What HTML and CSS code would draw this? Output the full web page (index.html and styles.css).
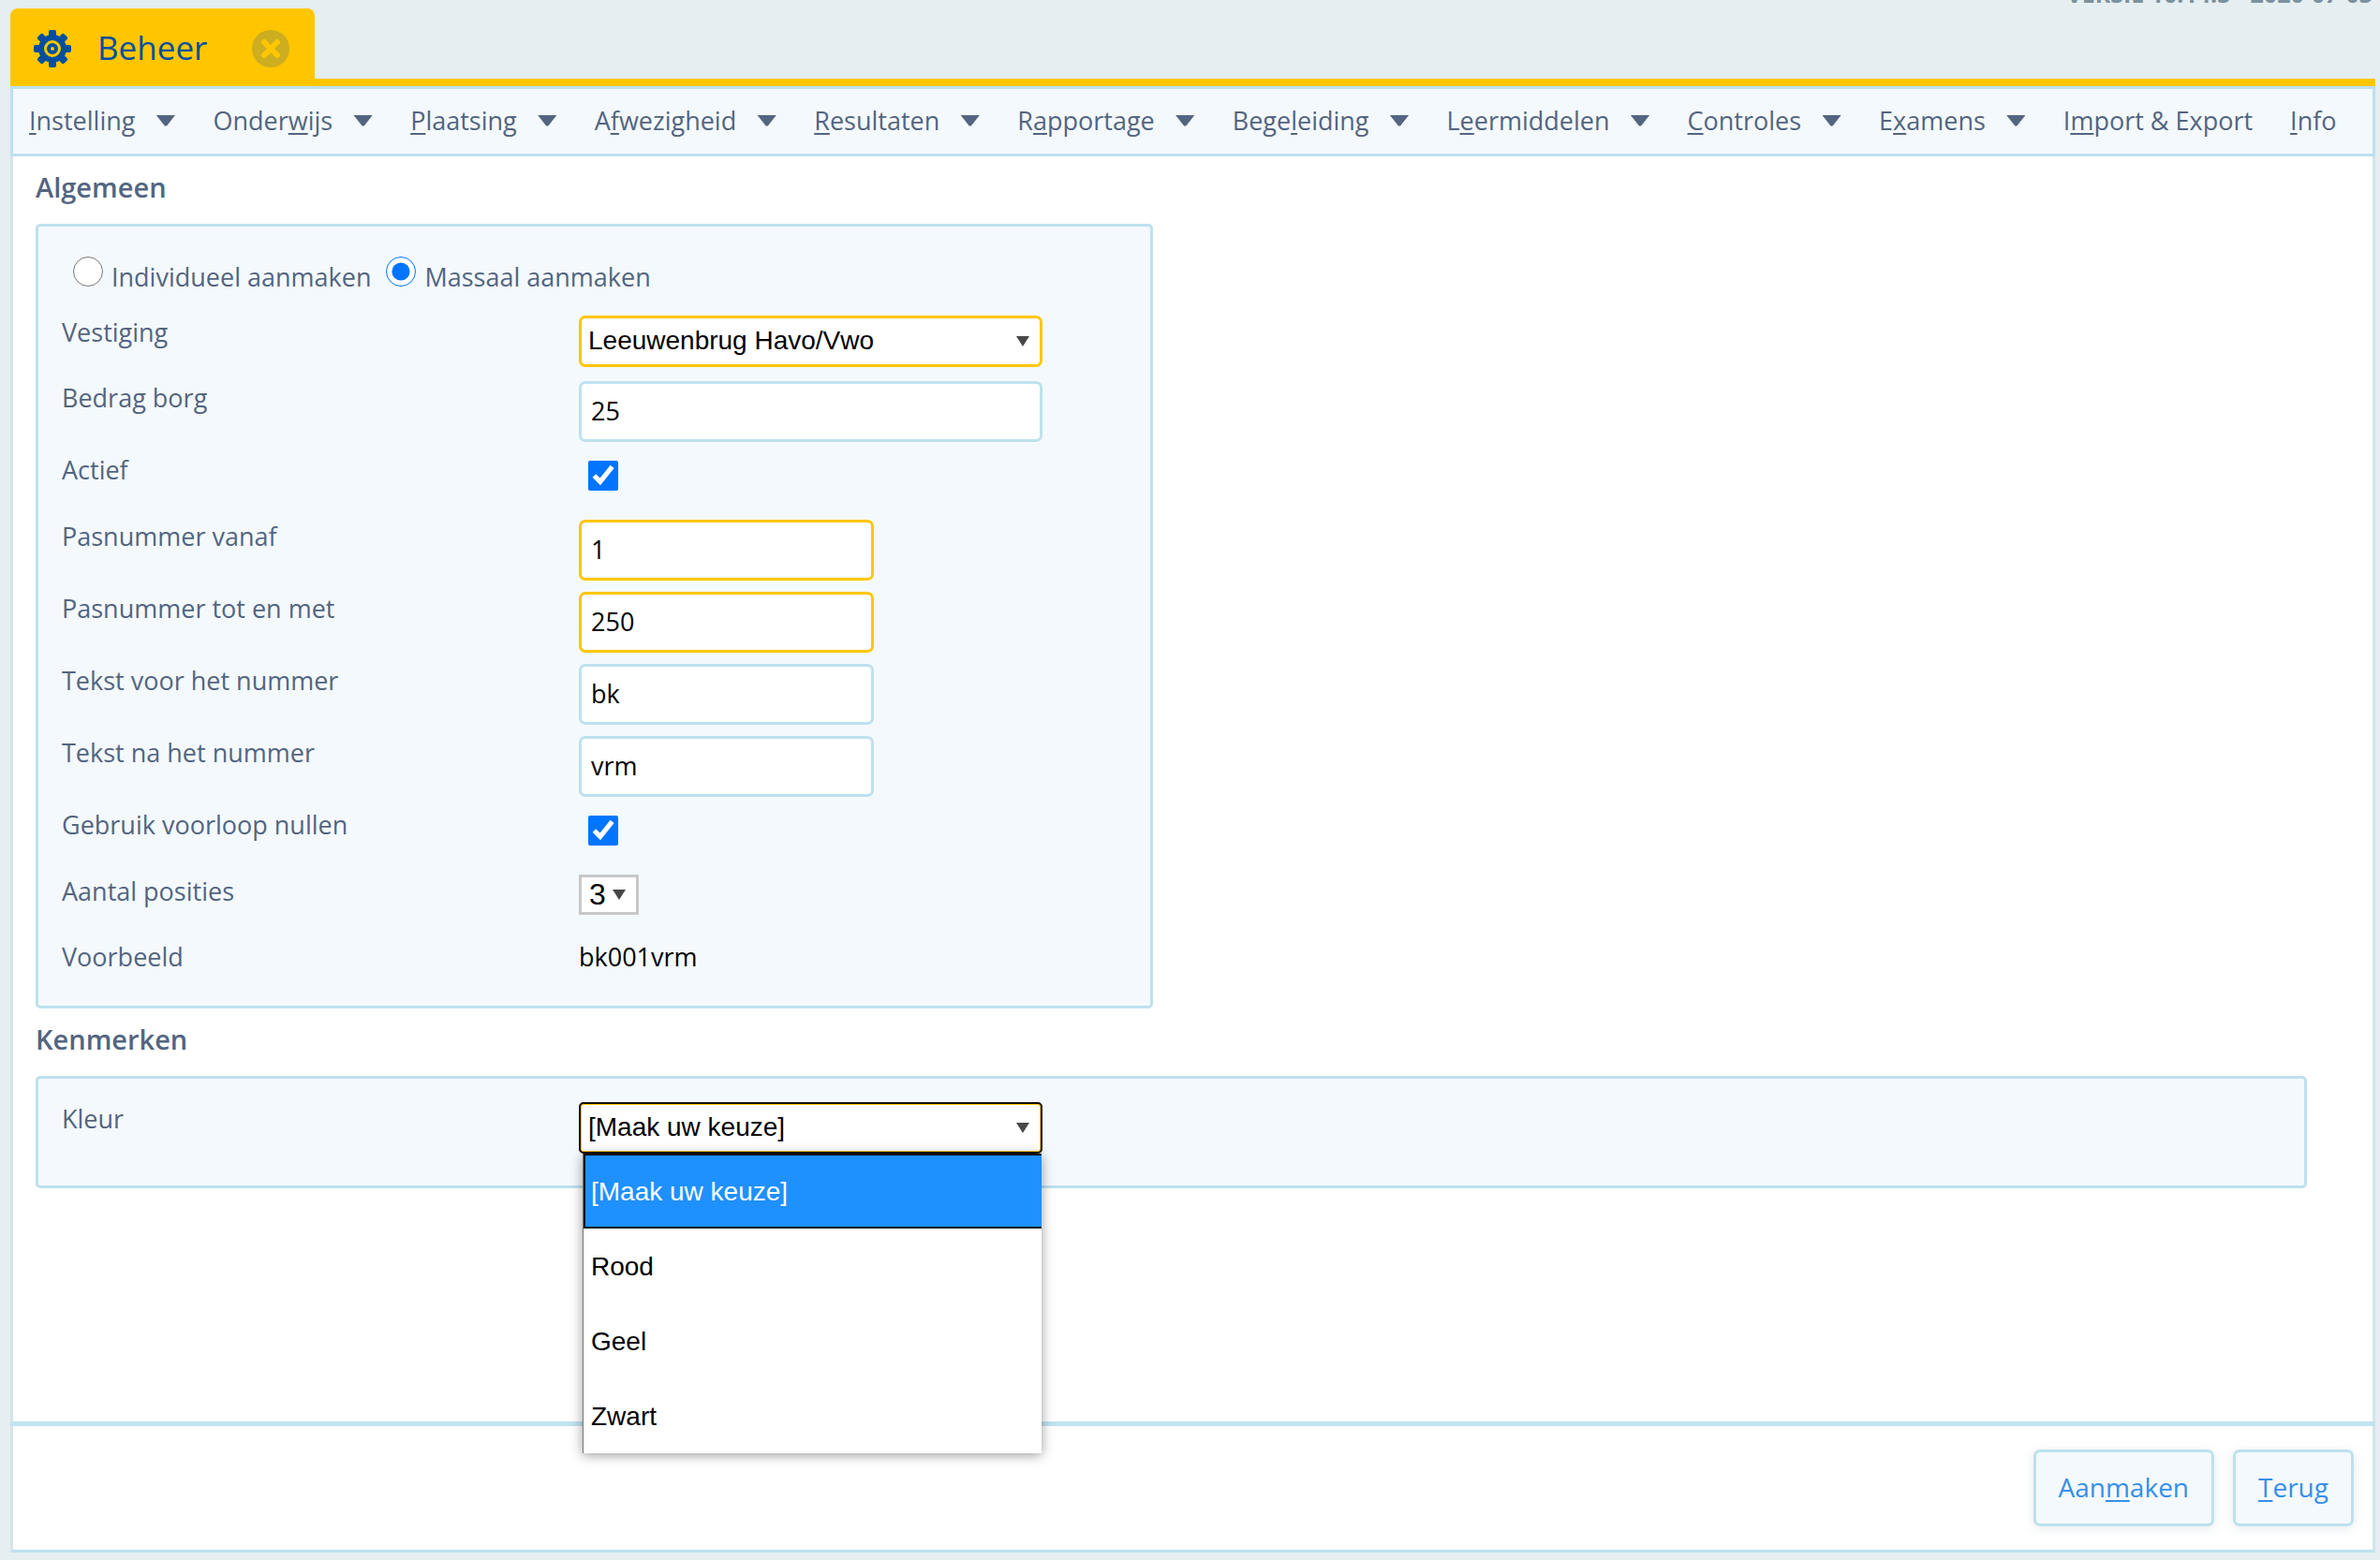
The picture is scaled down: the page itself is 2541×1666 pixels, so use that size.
FILE: index.html
```html
<!DOCTYPE html>
<html lang="nl">
<head>
<meta charset="utf-8">
<meta name="viewport" content="width=device-width, initial-scale=1">
<title>Beheer</title>
<link rel="stylesheet" href="styles.css">
</head>
<body>
<div class="version">VERSIE 10.14.3 - 2020-07-03</div>
<header class="tabs">
  <div class="tab">
    <svg class="tab-icon" viewBox="0 0 40 40" aria-hidden="true">
      <g fill="#004f9f">
        <rect x="16" y="0" width="8" height="40" rx="2"/>
        <rect x="0" y="16" width="40" height="8" rx="2"/>
        <g transform="rotate(45 20 20)">
          <rect x="16" y="0" width="8" height="40" rx="2"/>
          <rect x="0" y="16" width="40" height="8" rx="2"/>
        </g>
        <circle cx="20" cy="20" r="15"/>
      </g>
      <circle cx="20" cy="20" r="7.5" fill="none" stroke="#ffc600" stroke-width="3"/>
      <circle cx="20" cy="20" r="2" fill="#ffc600"/>
    </svg>
    <span class="tab-title">Beheer</span>
    <button class="tab-close" type="button" aria-label="Sluiten">
      <svg viewBox="0 0 40 40" aria-hidden="true">
        <circle cx="20" cy="20" r="20" fill="#ccae20"/>
        <path d="M13 13L27 27M27 13L13 27" stroke="#ffc600" stroke-width="6" stroke-linecap="round"/>
      </svg>
    </button>
  </div>
</header>
<div class="frame">
  <nav class="menu">
    <a class="drop" href="#"><span><u>I</u>nstelling</span></a>
    <a class="drop" href="#"><span>Onder<u>w</u>ijs</span></a>
    <a class="drop" href="#"><span><u>P</u>laatsing</span></a>
    <a class="drop" href="#"><span>A<u>f</u>wezigheid</span></a>
    <a class="drop" href="#"><span><u>R</u>esultaten</span></a>
    <a class="drop" href="#"><span>R<u>a</u>pportage</span></a>
    <a class="drop" href="#"><span>Bege<u>l</u>eiding</span></a>
    <a class="drop" href="#"><span>L<u>e</u>ermiddelen</span></a>
    <a class="drop" href="#"><span><u>C</u>ontroles</span></a>
    <a class="drop" href="#"><span>E<u>x</u>amens</span></a>
    <a href="#"><span>I<u>m</u>port &amp; Export</span></a>
    <a href="#"><span><u>I</u>nfo</span></a>
  </nav>
  <form class="form">
    <main class="content">
      <h2>Algemeen</h2>
      <section class="panel panel-general">
        <div class="modes">
          <label><input type="radio" name="mode"><span>Individueel aanmaken</span></label>
          <label><input type="radio" name="mode" checked><span>Massaal aanmaken</span></label>
        </div>
        <div class="row row-select">
          <label for="vestiging">Vestiging</label>
          <select id="vestiging" class="select required"><option>Leeuwenbrug Havo/Vwo</option></select>
        </div>
        <div class="row">
          <label for="borg">Bedrag borg</label>
          <input id="borg" class="text wide" type="text" value="25">
        </div>
        <div class="row row-check">
          <label for="actief">Actief</label>
          <input id="actief" type="checkbox" checked>
        </div>
        <div class="row">
          <label for="vanaf">Pasnummer vanaf</label>
          <input id="vanaf" class="text required" type="text" value="1">
        </div>
        <div class="row">
          <label for="totmet">Pasnummer tot en met</label>
          <input id="totmet" class="text required" type="text" value="250">
        </div>
        <div class="row">
          <label for="voor">Tekst voor het nummer</label>
          <input id="voor" class="text" type="text" value="bk">
        </div>
        <div class="row">
          <label for="na">Tekst na het nummer</label>
          <input id="na" class="text" type="text" value="vrm">
        </div>
        <div class="row row-check">
          <label for="nullen">Gebruik voorloop nullen</label>
          <input id="nullen" type="checkbox" checked>
        </div>
        <div class="row row-select">
          <label for="posities">Aantal posities</label>
          <select id="posities" class="select-small"><option>3</option></select>
        </div>
        <div class="row row-select">
          <label for="voorbeeld">Voorbeeld</label>
          <output id="voorbeeld">bk001vrm</output>
        </div>
      </section>
      <h2>Kenmerken</h2>
      <section class="panel panel-traits">
        <div class="row row-select">
          <label for="kleur">Kleur</label>
          <div class="combo">
            <select id="kleur" class="select focused"><option>[Maak uw keuze]</option></select>
            <ul class="options" role="listbox" aria-label="Kleur">
              <li class="active" role="option" aria-selected="true">[Maak uw keuze]</li>
              <li role="option">Rood</li>
              <li role="option">Geel</li>
              <li role="option">Zwart</li>
            </ul>
          </div>
        </div>
      </section>
    </main>
    <footer class="actions">
      <button type="button">Aan<u>m</u>aken</button>
      <button type="button"><u>T</u>erug</button>
    </footer>
  </form>
</div>
</body>
</html>
```
FILE: styles.css
```css
* { box-sizing: border-box; }

body {
  margin: 0;
  min-height: 100vh;
  padding: 0 5px 8px 11px;
  display: flex;
  flex-direction: column;
  position: relative;
  overflow-x: hidden;
  background: #e5eef0;
  color: #536580;
  font: 27px/36px "Open Sans", "Noto Sans", sans-serif;
}

.version {
  position: absolute;
  top: -25px;
  right: 8px;
  font-size: 25px;
  font-weight: 700;
  color: #7b919e;
}

.tabs {
  padding-top: 9px;
  border-bottom: 8px solid #ffc600;
}
.tab {
  display: flex;
  align-items: center;
  width: 325px;
  height: 75px;
  padding: 10px 27px 0 25px;
  border-radius: 8px 8px 0 0;
  background: #ffc600;
}
.tab-icon { width: 40px; height: 40px; }
.tab-title {
  flex: 1;
  margin-left: 28px;
  padding-bottom: 2px;
  font-size: 35px;
  color: #004f9f;
}
.tab-close {
  width: 40px;
  height: 40px;
  padding: 0;
  border: 0;
  background: none;
}
.tab-close svg { display: block; }

.frame {
  flex: 1;
  display: flex;
  flex-direction: column;
  border: solid #d4e5ea;
  border-width: 0 3px 3px;
  border-bottom-color: #bde1ee;
  background: #fff;
}

.menu {
  display: flex;
  gap: 40px;
  height: 75px;
  margin: 0 -3px;
  padding: 0 20px 2px 17px;
  align-items: center;
  border: 3px solid #bde1ee;
  background: #f4f9fd;
  white-space: nowrap;
}
.menu a {
  display: flex;
  align-items: center;
  gap: 22px;
  color: inherit;
  text-decoration: none;
}
.menu .drop::after {
  content: "";
  width: 21px;
  height: 12px;
  background: #536580;
  clip-path: polygon(0 0, 100% 0, 55% 100%, 45% 100%);
}

u { text-underline-offset: 3px; text-decoration-thickness: 2px; }

.form {
  flex: 1;
  display: flex;
  flex-direction: column;
}
.content {
  flex: 1;
  padding: 0 70px 0 24px;
}

h2 {
  margin: 0;
  padding: 13px 0 19px;
  font-size: 29px;
  line-height: 40px;
  font-weight: 600;
}

.panel {
  border: 3px solid #bde1ee;
  border-radius: 5px;
  background: #f4f9fd;
  padding: 0 25px;
}
.panel-general { width: 1193px; max-width: 100%; }
.panel-traits { padding-top: 25px; padding-bottom: 19px; }

.modes {
  display: flex;
  gap: 16px;
  height: 95px;
  padding: 32px 0 0 12px;
}
.modes label { display: flex; align-items: flex-start; gap: 9px; }
.modes span { padding-top: 4px; }

input[type="radio"], input[type="checkbox"] {
  width: 32px;
  height: 32px;
  margin: 0;
  accent-color: #0075ff;
}
.row input[type="checkbox"] { margin: 8px 0 0 10px; }

.row {
  display: grid;
  grid-template-columns: 552px 1fr;
  align-items: start;
  justify-items: start;
  height: 77px;
}
.row-select { height: 70px; }
.row-check { height: 71px; }

.text {
  width: 315px;
  height: 65px;
  padding: 0 10px 2px;
  border: 3px solid #bde1ee;
  border-radius: 7px;
  background: #fff;
  color: #000;
  font: inherit;
}
.wide { width: 495px; }

select {
  appearance: none;
  color: #000;
  background: #fff url("data:image/svg+xml,%3Csvg xmlns='http://www.w3.org/2000/svg' width='14' height='11'%3E%3Cpath d='M0 0H14L7 11Z' fill='%23484848'/%3E%3C/svg%3E") no-repeat right 11px center;
}
.select {
  width: 495px;
  height: 55px;
  padding: 0 7px 2px;
  border: 3px solid #bde1ee;
  border-radius: 7px;
  font: 28px/36px "Liberation Sans", Arial, sans-serif;
}
.required { border-color: #ffc600; }
.select-small {
  width: 64px;
  height: 43px;
  padding: 0 8px 1px;
  border: 3px solid #c8c8c8;
  border-radius: 0;
  font: 32px/36px "Liberation Sans", Arial, sans-serif;
}
output { color: #000; }

.combo { position: relative; }
.combo .focused {
  display: block;
  border: 1px solid #ffc600;
  border-radius: 5px;
  outline: 2px solid #101010;
  outline-offset: -2px;
  padding: 0 9px 2px;
  box-shadow: inset 0 0 0 2px #ffc600;
  background-position: right 13px center;
}
.options {
  position: absolute;
  top: 55px;
  left: 4px;
  right: 1px;
  margin: 0;
  padding: 0;
  list-style: none;
  border-left: 1px solid #767676;
  background: #fff;
  color: #000;
  font: 28px/82px "Liberation Sans", Arial, sans-serif;
  box-shadow: 0 2px 12px rgba(0, 0, 0, 0.4);
}
.options li { height: 80px; padding-left: 8px; }
.options .active {
  background: #1e90ff;
  color: #fff;
  box-shadow: inset 2px 2px #101010, inset 0 -2px #101010;
}

.actions {
  display: flex;
  justify-content: flex-end;
  gap: 20px;
  margin: 0 -3px;
  padding: 25px 23px 25px;
  border-top: 5px solid #c0e2ef;
}
.actions button {
  height: 82px;
  padding: 0 24px 2px;
  border: 3px solid #bde1ee;
  border-radius: 7px;
  background: #f4f9fd;
  color: #368fe9;
  font: inherit;
  font-size: 28px;
  box-shadow: 0 2px 12px rgba(80, 110, 130, 0.15);
}
```
